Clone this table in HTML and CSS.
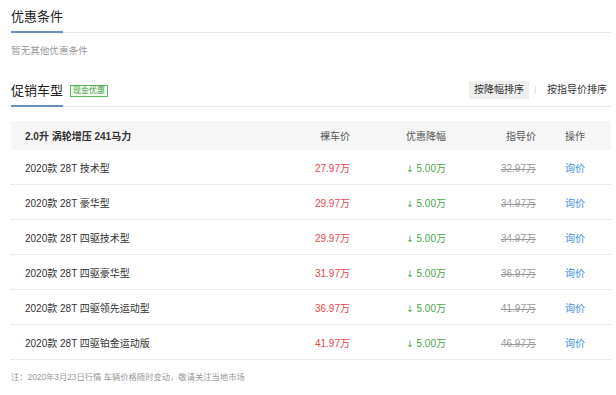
FILE: index.html
```html
<!DOCTYPE html>
<html lang="zh-CN">
<head>
<meta charset="utf-8">
<title>促销车型</title>
<link rel="stylesheet" href="styles.css">
</head>
<body>
<div class="page">
  <div class="sec-head first">
    <div class="tab">优惠条件</div>
  </div>
  <p class="empty">暂无其他优惠条件</p>

  <div class="sec-head second">
    <div class="tab">促销车型</div>
    <span class="tag">现金优惠</span>
    <div class="sorts">
      <span class="sort active">按降幅排序</span>
      <span class="sep"></span>
      <span class="sort">按指导价排序</span>
    </div>
  </div>

  <div class="table">
    <div class="row head">
      <div class="c-name">2.0升 涡轮增压 241马力</div>
      <div class="c-r">裸车价</div>
      <div class="c-r">优惠降幅</div>
      <div class="c-r">指导价</div>
      <div class="c-r">操作</div>
    </div>
    <div class="row">
      <div class="c-name">2020款 28T 技术型</div>
      <div class="c-r price">27.97万</div>
      <div class="c-r down"><span class="arrow">↓</span> 5.00万</div>
      <div class="c-r guide">32.97万</div>
      <div class="c-r"><a class="ask">询价</a></div>
    </div>
    <div class="row">
      <div class="c-name">2020款 28T 豪华型</div>
      <div class="c-r price">29.97万</div>
      <div class="c-r down"><span class="arrow">↓</span> 5.00万</div>
      <div class="c-r guide">34.97万</div>
      <div class="c-r"><a class="ask">询价</a></div>
    </div>
    <div class="row">
      <div class="c-name">2020款 28T 四驱技术型</div>
      <div class="c-r price">29.97万</div>
      <div class="c-r down"><span class="arrow">↓</span> 5.00万</div>
      <div class="c-r guide">34.97万</div>
      <div class="c-r"><a class="ask">询价</a></div>
    </div>
    <div class="row">
      <div class="c-name">2020款 28T 四驱豪华型</div>
      <div class="c-r price">31.97万</div>
      <div class="c-r down"><span class="arrow">↓</span> 5.00万</div>
      <div class="c-r guide">36.97万</div>
      <div class="c-r"><a class="ask">询价</a></div>
    </div>
    <div class="row">
      <div class="c-name">2020款 28T 四驱领先运动型</div>
      <div class="c-r price">36.97万</div>
      <div class="c-r down"><span class="arrow">↓</span> 5.00万</div>
      <div class="c-r guide">41.97万</div>
      <div class="c-r"><a class="ask">询价</a></div>
    </div>
    <div class="row">
      <div class="c-name">2020款 28T 四驱铂金运动版</div>
      <div class="c-r price">41.97万</div>
      <div class="c-r down"><span class="arrow">↓</span> 5.00万</div>
      <div class="c-r guide">46.97万</div>
      <div class="c-r"><a class="ask">询价</a></div>
    </div>
  </div>
  <p class="note">注：2020年3月23日行情 车辆价格随时变动，敬请关注当地市场</p>
</div>
</body>
</html>
```

FILE: styles.css
```css
* { box-sizing: border-box; }
html, body { margin: 0; padding: 0; background: #fff; }
body {
  font-family: "Liberation Sans", "Noto Sans CJK SC", sans-serif;
  color: #333;
}
.page {
  width: 611px;
  padding-left: 11px;
}
.sec-head {
  display: flex;
  align-items: center;
  height: 33px;
  padding-top: 3px;
  border-bottom: 1px solid #e6e6e6;
}
.sec-head.second { margin-top: 16px; }
.tab {
  font-size: 13px;
  line-height: 28px;
  height: 30px;
  color: #222;
  border-bottom: 2px solid #6c8fb5;
  margin-bottom: -1px;
  align-self: flex-end;
}
.tag {
  margin-left: 7px;
  margin-top: -1px;
  font-size: 8px;
  line-height: 10px;
  padding: 0 2px;
  color: #3f9e3f;
  border: 1px solid #5cb85c;
  background: #f3fbf1;
}
.sorts {
  margin-left: auto;
  display: flex;
  align-items: center;
  margin-bottom: 3px;
  margin-right: 4px;
}
.sort {
  font-size: 10px;
  line-height: 18px;
  padding: 0 5px;
  color: #333;
}
.sort:last-child { padding-right: 0; }
.sort.active { background: #eeeeee; }
.sep {
  width: 1px;
  height: 8px;
  background: #e3e3e3;
  margin: 0 6px;
}
.empty {
  margin: 11px 0 0;
  font-size: 9.6px;
  line-height: 14px;
  color: #999;
}
.table { margin-top: 14px; }
.row {
  display: grid;
  grid-template-columns: 1fr 60px 96px 90px 49px;
  align-items: center;
  height: 35px;
  padding: 0 26px 0 14px;
  font-size: 10px;
  border-bottom: 1px dotted #dcdcdc;
}
.row.head {
  height: 29px;
  background: #f6f6f6;
  border-bottom: none;
  color: #555;
}
.row.head .c-name { font-weight: bold; color: #333; }
.c-r { text-align: right; white-space: nowrap; }
.price { color: #e5474d; }
.down { color: #49a84a; }
.arrow { font-family: "DejaVu Sans", sans-serif; font-size: 9px; }
.guide { color: #999; text-decoration: line-through; }
.ask { color: #3d8de6; text-decoration: none; }
.note {
  margin: 11px 0 0;
  font-size: 8.3px;
  line-height: 12px;
  color: #999;
}
```
